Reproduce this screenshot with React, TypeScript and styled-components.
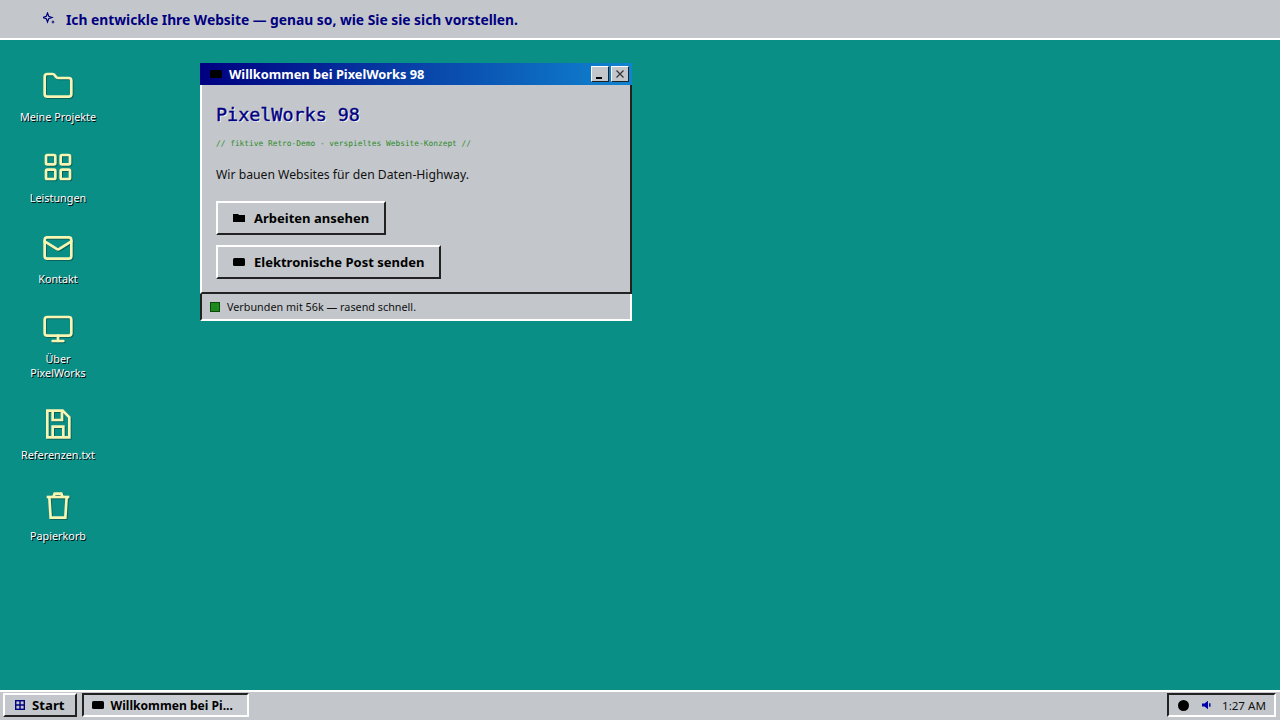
import styled, { createGlobalStyle } from "styled-components";
import { Folder, LayoutGrid, Mail, Monitor } from "lucide-react";

const GlobalStyle = createGlobalStyle`
  html, body { margin: 0; padding: 0; height: 100%; }
  body { font-family: "Noto Sans", sans-serif; overflow: hidden; }
  #root { height: 100%; }
`;

const Screen = styled.div`
  width: 1280px;
  height: 720px;
  display: flex;
  flex-direction: column;
  background: #0a8f87;
`;

const Banner = styled.header`
  height: 38px;
  flex: none;
  display: flex;
  align-items: center;
  gap: 11px;
  padding-left: 43px;
  background: #c3c7cb;
  border-bottom: 2px solid #fff;
  color: #000080;
  font-size: 13.8px;
  font-weight: 700;
  svg { display: block; margin-top: -3px; }
`;

const Desktop = styled.main`
  flex: 1;
  display: flex;
  align-items: flex-start;
  gap: 100px;
  padding: 23px 0 0 16px;
`;

const IconColumn = styled.nav`
  width: 84px;
  margin-top: 7px;
  display: flex;
  flex-direction: column;
  gap: 27px;
`;

const IconItem = styled.a`
  display: flex;
  flex-direction: column;
  align-items: center;
  gap: 8px;
  color: #fff;
  font-size: 10.8px;
  line-height: 14px;
  text-align: center;
  text-shadow: 1px 1px 0 #000;
  svg {
    display: block;
    color: #f8f5b2;
    filter: drop-shadow(1px 1px 0 rgba(0, 0, 0, 0.3));
  }
`;

const IconLabel = styled.span<{ $narrow?: boolean }>`
  width: ${p => (p.$narrow ? "60px" : "auto")};
  margin-top: ${p => (p.$narrow ? "-1px" : "0")};
  margin-bottom: ${p => (p.$narrow ? "1px" : "0")};
`;

const Window = styled.section`
  width: 432px;
  display: flex;
  flex-direction: column;
`;

const TitleBar = styled.div`
  height: 22px;
  display: flex;
  align-items: center;
  padding: 0 3px 0 10px;
  background: linear-gradient(90deg, #000080, #1084d0);
  color: #fff;
  font-size: 12.8px;
  font-weight: 700;
`;

const TitleText = styled.span`
  flex: 1;
  margin-left: 7px;
`;

const ChromeButton = styled.button`
  width: 18px;
  height: 16px;
  margin-left: 2px;
  padding: 0;
  display: flex;
  align-items: center;
  justify-content: center;
  background: #c3c7cb;
  border: 1px solid;
  border-color: #fff #222 #222 #fff;
  color: #000;
  svg { display: block; }
`;

const WindowBody = styled.div`
  padding: 15px 16px 13px 14px;
  background: #c3c7cb;
  border-left: 2px solid #fff;
  border-right: 2px solid #222;
  border-bottom: 2px solid #222;
`;

const Heading = styled.h1`
  margin: 1px 0 0;
  color: #000080;
  font-family: "DejaVu Sans Mono", monospace;
  font-size: 18.4px;
  font-weight: 400;
  line-height: 28px;
  -webkit-text-stroke: 0.4px #000080;
  text-shadow: 1px 1px 0 #fff;
`;

const Tagline = styled.p`
  margin: 9px 0 0;
  color: #2e8b2e;
  font-family: "DejaVu Sans Mono", monospace;
  font-size: 7.85px;
  line-height: 12px;
`;

const Lead = styled.p`
  margin: 16px 0 0;
  color: #111;
  font-size: 12.2px;
  line-height: 18px;
`;

const Actions = styled.div`
  margin-top: 17px;
  display: flex;
  flex-direction: column;
  align-items: flex-start;
  gap: 10px;
`;

const ActionButton = styled.button`
  height: 34px;
  padding: 0 15px;
  display: flex;
  align-items: center;
  gap: 9px;
  background: #c3c7cb;
  border: 2px solid;
  border-color: #fff #222 #222 #fff;
  color: #000;
  font-family: "Noto Sans", sans-serif;
  font-size: 13px;
  font-weight: 700;
  svg { display: block; }
`;

const StatusBar = styled.div`
  height: 27px;
  box-sizing: border-box;
  display: flex;
  align-items: center;
  gap: 7px;
  padding-left: 8px;
  background: #c3c7cb;
  border: 2px solid;
  border-color: #222 #fff #fff #222;
  border-top-width: 0;
  font-size: 10.8px;
  color: #111;
`;

const Led = styled.span`
  width: 8px;
  height: 8px;
  background: #1e8a1e;
  border: 1px solid #0a4a0a;
`;

const Taskbar = styled.footer`
  height: 30px;
  flex: none;
  box-sizing: border-box;
  display: flex;
  align-items: flex-start;
  gap: 5px;
  padding: 1px 4px 3px 3px;
  background: #c3c7cb;
  border-top: 2px solid #fff;
`;

const TaskButton = styled.button<{ $pressed?: boolean }>`
  height: 24px;
  box-sizing: border-box;
  display: flex;
  align-items: center;
  gap: 7px;
  padding: ${p => (p.$pressed ? "0 14px 0 8px" : "0 10px")};
  background: ${p => (p.$pressed ? "#c9ccd0" : "#c3c7cb")};
  border: 2px solid;
  border-color: ${p => (p.$pressed ? "#222 #fff #fff #222" : "#fff #222 #222 #fff")};
  color: #000;
  font-family: "Noto Sans", sans-serif;
  font-size: ${p => (p.$pressed ? "12.1px" : "13.2px")};
  font-weight: 700;
  white-space: nowrap;
  svg { display: block; }
`;

const Tray = styled.div`
  margin-left: auto;
  width: 109px;
  height: 24px;
  box-sizing: border-box;
  display: flex;
  align-items: center;
  padding-left: 9px;
  border: 2px solid;
  border-color: #222 #fff #fff #222;
  font-size: 11.6px;
  color: #111;
  svg { display: block; margin-left: 13px; }
`;

const TrayDot = styled.span`
  width: 11px;
  height: 11px;
  border-radius: 50%;
  background: #000;
`;

const TrayClock = styled.span`
  margin-left: 10px;
`;

function Floppy() {
  return (
    <svg width="32" height="32" viewBox="0 0 24 24" fill="none" stroke="currentColor" strokeWidth="2">
      <path d="M4 2h11.5L20.5 7v15H4z" />
      <path d="M8 2v7h7V2" />
      <path d="M8 22v-8h8v8" />
    </svg>
  );
}

function Bin() {
  return (
    <svg width="32" height="32" viewBox="0 0 24 24" fill="none" stroke="currentColor" strokeWidth="2">
      <path d="M3.5 6h17" />
      <path d="M5.5 6l1 15.5h11l1-15.5" />
      <path d="M8.5 6l1-2.5h5l1 2.5" />
    </svg>
  );
}

const desktopIcons = [
  { label: "Meine Projekte", icon: <Folder size={32} strokeWidth={2} /> },
  { label: "Leistungen", icon: <LayoutGrid size={32} strokeWidth={2} /> },
  { label: "Kontakt", icon: <Mail size={32} strokeWidth={2} /> },
  { label: "Über PixelWorks", icon: <Monitor size={32} strokeWidth={2} />, narrow: true },
  { label: "Referenzen.txt", icon: <Floppy /> },
  { label: "Papierkorb", icon: <Bin /> },
];

function SparkleMark() {
  return (
    <svg width="12" height="12" viewBox="0 0 12 12">
      <path d="M4.5 1l1.2 3.3L9 5.5 5.7 6.7 4.5 10 3.3 6.7 0 5.5l3.3-1.2z" fill="none" stroke="#000080" strokeWidth="1.2" />
      <path d="M10 8l.6 1.4L12 10l-1.4.6L10 12l-.6-1.4L8 10l1.4-.6z" fill="#000080" />
    </svg>
  );
}

function BlackFolder() {
  return (
    <svg width="12" height="12" viewBox="0 0 12 12">
      <path d="M0 2h5l1 1h6v7H0z" fill="#000" />
    </svg>
  );
}

function BlackScreen() {
  return (
    <svg width="12" height="12" viewBox="0 0 12 12">
      <rect x="0" y="2" width="12" height="8" rx="1.5" fill="#000" />
    </svg>
  );
}

function WinLogo() {
  return (
    <svg width="10" height="10" viewBox="0 0 10 10" fill="none" stroke="#000080" strokeWidth="1.4">
      <rect x="0.7" y="0.7" width="8.6" height="8.6" />
      <path d="M5 0.7v8.6M0.7 5h8.6" />
    </svg>
  );
}

function Speaker() {
  return (
    <svg width="10" height="10" viewBox="0 0 10 10">
      <path d="M0 3.5h2.5L6 .8v8.4L2.5 6.5H0z" fill="#0000a8" />
      <path d="M7.8 3.2v3.6" stroke="#0000a8" strokeWidth="1.4" />
    </svg>
  );
}

export default function App() {
  return (
    <Screen>
      <GlobalStyle />
      <Banner>
        <SparkleMark />
        Ich entwickle Ihre Website — genau so, wie Sie sie sich vorstellen.
      </Banner>
      <Desktop>
        <IconColumn>
          {desktopIcons.map(({ label, icon, narrow }) => (
            <IconItem key={label}>
              {icon}
              <IconLabel $narrow={narrow}>{label}</IconLabel>
            </IconItem>
          ))}
        </IconColumn>
        <Window>
          <TitleBar>
            <BlackScreen />
            <TitleText>Willkommen bei PixelWorks 98</TitleText>
            <ChromeButton aria-label="Minimieren">
              <svg width="10" height="10" viewBox="0 0 10 10">
                <rect x="1" y="8" width="6" height="2" fill="#000" />
              </svg>
            </ChromeButton>
            <ChromeButton aria-label="Schließen">
              <svg width="10" height="10" viewBox="0 0 10 10">
                <path d="M1.5 1.5l7 7M8.5 1.5l-7 7" stroke="#333" strokeWidth="1.2" />
              </svg>
            </ChromeButton>
          </TitleBar>
          <WindowBody>
            <Heading>PixelWorks 98</Heading>
            <Tagline>// fiktive Retro-Demo - verspieltes Website-Konzept //</Tagline>
            <Lead>Wir bauen Websites für den Daten-Highway.</Lead>
            <Actions>
              <ActionButton>
                <BlackFolder />
                Arbeiten ansehen
              </ActionButton>
              <ActionButton>
                <BlackScreen />
                Elektronische Post senden
              </ActionButton>
            </Actions>
          </WindowBody>
          <StatusBar>
            <Led />
            Verbunden mit 56k — rasend schnell.
          </StatusBar>
        </Window>
      </Desktop>
      <Taskbar>
        <TaskButton>
          <WinLogo />
          Start
        </TaskButton>
        <TaskButton $pressed>
          <BlackScreen />
          Willkommen bei Pi...
        </TaskButton>
        <Tray>
          <TrayDot />
          <Speaker />
          <TrayClock>1:27 AM</TrayClock>
        </Tray>
      </Taskbar>
    </Screen>
  );
}
